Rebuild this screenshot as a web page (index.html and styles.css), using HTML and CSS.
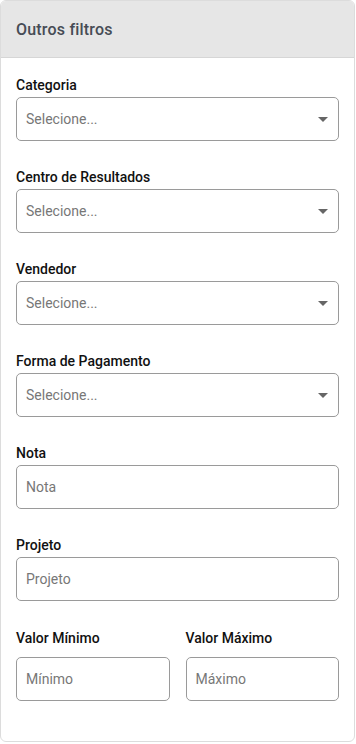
FILE: index.html
```html
<!DOCTYPE html>
<html lang="pt-BR">
<head>
<meta charset="utf-8">
<title>Outros filtros</title>
<link rel="stylesheet" href="styles.css">
</head>
<body>
<section class="card">
  <header class="card-header">Outros filtros</header>
  <div class="card-body">
    <div class="field">
      <label class="label">Categoria</label>
      <div class="select"><span class="placeholder">Selecione...</span><svg class="caret" width="10" height="5" viewBox="0 0 10 5"><path d="M0 0h10L5 5z" fill="#666"/></svg></div>
    </div>
    <div class="field">
      <label class="label">Centro de Resultados</label>
      <div class="select"><span class="placeholder">Selecione...</span><svg class="caret" width="10" height="5" viewBox="0 0 10 5"><path d="M0 0h10L5 5z" fill="#666"/></svg></div>
    </div>
    <div class="field">
      <label class="label">Vendedor</label>
      <div class="select"><span class="placeholder">Selecione...</span><svg class="caret" width="10" height="5" viewBox="0 0 10 5"><path d="M0 0h10L5 5z" fill="#666"/></svg></div>
    </div>
    <div class="field">
      <label class="label">Forma de Pagamento</label>
      <div class="select"><span class="placeholder">Selecione...</span><svg class="caret" width="10" height="5" viewBox="0 0 10 5"><path d="M0 0h10L5 5z" fill="#666"/></svg></div>
    </div>
    <div class="field">
      <label class="label">Nota</label>
      <input class="input" type="text" placeholder="Nota">
    </div>
    <div class="field">
      <label class="label">Projeto</label>
      <input class="input" type="text" placeholder="Projeto">
    </div>
    <div class="row">
      <div class="field field-wide">
        <label class="label">Valor Mínimo</label>
        <input class="input" type="text" placeholder="Mínimo">
      </div>
      <div class="field field-wide">
        <label class="label">Valor Máximo</label>
        <input class="input" type="text" placeholder="Máximo">
      </div>
    </div>
  </div>
</section>
</body>
</html>
```
FILE: styles.css
```css
* { box-sizing: border-box; }
html, body { margin: 0; padding: 0; background: #fff; }
body { font-family: Roboto, "Noto Sans", Arial, sans-serif; width: 356px; }

.card {
  width: 355px;
  height: 742px;
  border: 1px solid #dcdcdc;
  border-radius: 6px;
  overflow: hidden;
  background: #fff;
}
.card-header {
  height: 57px;
  background: #e6e6e6;
  border-bottom: 1px solid #d6d6d6;
  padding: 0 15px;
  display: flex;
  align-items: center;
  font-size: 16px;
  font-weight: 500;
  color: #464c55;
  letter-spacing: 0.2px;
}
.card-body {
  padding: 19px 15px 0;
  display: flex;
  flex-direction: column;
  gap: 28px;
}
.field { display: flex; flex-direction: column; gap: 4px; }
.label {
  font-size: 14px;
  line-height: 16px;
  font-weight: 500;
  color: #111;
}
.select, .input {
  height: 44px;
  width: 100%;
  border: 1px solid #9a9a9a;
  border-radius: 5px;
  background: #fff;
  font-family: inherit;
  font-size: 14px;
  color: #333;
}
.select {
  display: flex;
  align-items: center;
  justify-content: space-between;
  padding: 0 10px 0 9px;
}
.placeholder { color: #777; }
.caret { display: block; }
.input { padding: 0 9px; outline: none; }
.input::placeholder { color: #777; opacity: 1; }
.row { display: flex; gap: 16px; margin-top: 1px; }
.row .field { flex: 1; min-width: 0; gap: 11px; }
```
